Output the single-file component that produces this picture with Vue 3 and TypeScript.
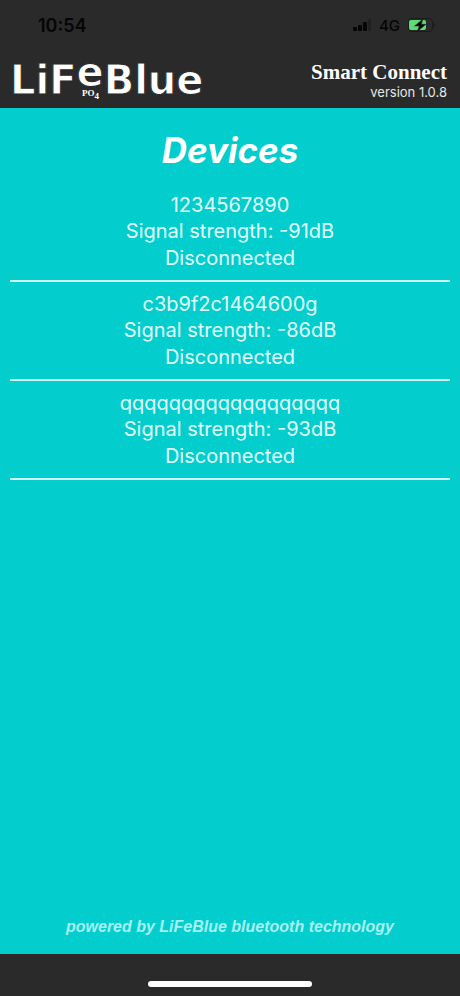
<script setup lang="ts">
interface Device {
  name: string
  signal: number
  status: string
}

const devices: Device[] = [
  { name: '1234567890', signal: -91, status: 'Disconnected' },
  { name: 'c3b9f2c1464600g', signal: -86, status: 'Disconnected' },
  { name: 'qqqqqqqqqqqqqqqqqq', signal: -93, status: 'Disconnected' },
]
</script>

<template>
  <div class="screen">
    <div class="status-bar">
      <time class="clock">10:54</time>
      <div class="indicators">
        <svg class="signal" width="18" height="12" viewBox="0 0 18 12" aria-hidden="true">
          <rect x="0" y="8" width="4" height="4" rx="1" fill="#050505" />
          <rect x="5" y="6" width="4" height="6" rx="1" fill="#050505" />
          <rect x="10" y="3" width="4" height="9" rx="1" fill="#050505" />
          <rect x="15" y="0" width="3" height="12" rx="1" fill="#202020" />
        </svg>
        <span class="network">4G</span>
        <svg class="battery" width="27" height="14" viewBox="0 0 27 14" aria-hidden="true">
          <rect x="0.5" y="0.5" width="24" height="13" rx="3.5" fill="none" stroke="#1b1b1b" />
          <path d="M25.5 4.7q2.4 2.3 0 4.6z" fill="#151515" />
          <rect x="1" y="2" width="17" height="10" rx="2" fill="#5bdc74" />
          <path d="M15 1 6.6 8h4.7l-2 5.4L18 6.3h-4.7z" fill="#070707" stroke="#202b22" stroke-width="0.6" />
        </svg>
      </div>
    </div>

    <header class="app-bar">
      <div class="logo">
        <span>LiF</span>
        <span class="logo-e">e</span>
        <span>Blue</span>
        <small class="formula"><span>PO</span><span class="four">4</span></small>
      </div>
      <div class="product">
        <strong class="product-name">Smart Connect</strong>
        <span class="version">version 1.0.8</span>
      </div>
    </header>

    <main class="content">
      <h1 class="title">Devices</h1>
      <ul class="devices">
        <li v-for="device in devices" :key="device.name" class="device">
          <span>{{ device.name }}</span>
          <span>Signal strength: {{ device.signal }}dB</span>
          <span class="state">{{ device.status }}</span>
        </li>
      </ul>
      <p class="powered">powered by LiFeBlue bluetooth technology</p>
    </main>

    <div class="home-area">
      <div class="home-indicator"></div>
    </div>
  </div>
</template>

<style>
body {
  margin: 0;
  background: #2a2a2a;
}
</style>

<style scoped>
.screen {
  display: flex;
  flex-direction: column;
  min-height: 100vh;
  background: #2a2a2a;
  color: #fff;
  font-family: Inter, "Liberation Sans", sans-serif;
}

.status-bar {
  display: flex;
  justify-content: space-between;
  align-items: center;
  height: 50px;
  padding: 0 25px 0 38px;
  box-sizing: border-box;
  color: #050505;
}

.clock {
  font-size: 18px;
  font-weight: 600;
}

.indicators {
  display: flex;
  align-items: center;
  gap: 8px;
}

.network {
  font-size: 15px;
  font-weight: 500;
}

.app-bar {
  display: flex;
  justify-content: space-between;
  align-items: center;
  height: 58px;
  padding: 2px 13px 0 10px;
  box-sizing: border-box;
}

.logo {
  position: relative;
  display: flex;
  font-family: "DejaVu Sans", sans-serif;
  font-size: 40px;
  font-weight: 700;
  line-height: 48px;
  -webkit-text-stroke: 1px #2a2a2a;
}

.logo-e {
  position: relative;
  top: -8px;
}

.formula {
  position: absolute;
  left: 72px;
  top: 31px;
  display: flex;
  font-family: "Liberation Serif", serif;
  font-size: 9px;
  font-weight: 700;
  line-height: 12px;
  -webkit-text-stroke: 0;
}

.four {
  padding-top: 3px;
}

.product {
  display: flex;
  flex-direction: column;
  align-items: flex-end;
}

.product-name {
  font-family: "Liberation Serif", serif;
  font-size: 21px;
  line-height: 24px;
}

.version {
  font-size: 13px;
  line-height: 16px;
  color: #e8e8e8;
}

.content {
  display: flex;
  flex: 1;
  flex-direction: column;
  padding: 20px 10px 16px;
  background: #03cdcd;
  text-align: center;
}

.title {
  margin: 0;
  font-size: 35px;
  font-style: italic;
  font-weight: 700;
  line-height: 44px;
}

.devices {
  margin: 11px 0 0;
  padding: 0;
  list-style: none;
}

.device {
  display: flex;
  flex-direction: column;
  padding: 9px 0 8px;
  border-bottom: 2px solid #d0fafa;
  color: #e2fdfd;
  font-size: 20px;
  line-height: 26px;
}

.state {
  line-height: 28px;
}

.powered {
  margin: auto 0 0;
  color: #a6f2f3;
  font-family: "Liberation Sans", Arial, sans-serif;
  font-size: 16px;
  font-style: italic;
  font-weight: 700;
  line-height: 22px;
}

.home-area {
  display: flex;
  justify-content: center;
  align-items: flex-end;
  height: 42px;
  padding-bottom: 9px;
  box-sizing: border-box;
}

.home-indicator {
  width: 164px;
  height: 6px;
  border-radius: 3px;
  background: #fff;
}
</style>
